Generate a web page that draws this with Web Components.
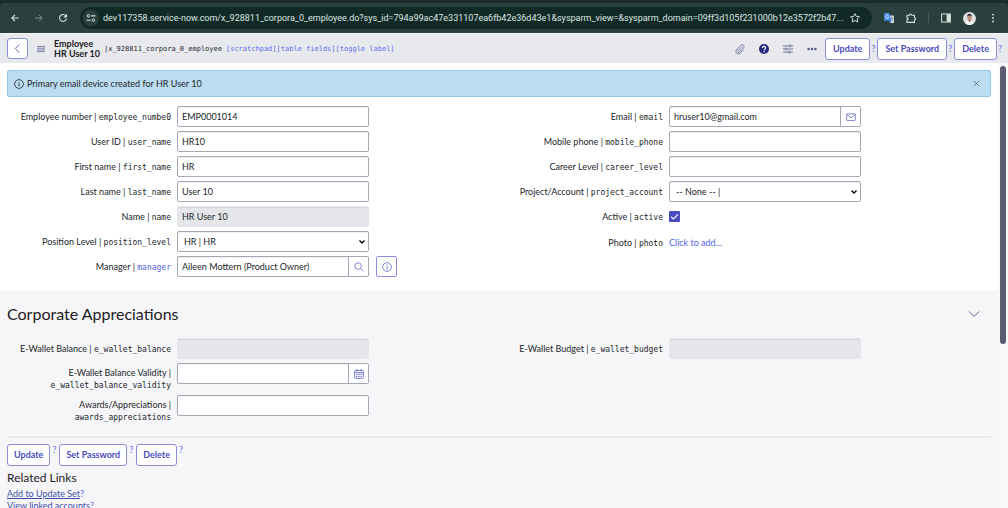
<!DOCTYPE html>
<html lang="en">
<head>
<meta charset="utf-8">
<title>HR User 10 | Employee</title>
<style>
html, body { margin: 0; height: 100%; }
body { font: 9px/12px Lato, "Liberation Sans", sans-serif; color: #22262a; background: #fff; overflow: hidden; }
</style>
</head>
<body>
<record-page></record-page>

<script>
const ICONS = {
  back: ['0 0 16 16', '<path d="M14 8H3M8 3L3 8l5 5" stroke-width="1.8"/>'],
  forward: ['0 0 16 16', '<path d="M2 8h11M8 3l5 5-5 5" stroke-width="1.6"/>'],
  reload: ['0 0 16 16', '<path d="M13 5.2A5.6 5.6 0 1 0 13.6 9M13.6 1.8v4.4H9.2" stroke-width="1.8"/>'],
  tune: ['0 0 16 16', '<circle cx="4" cy="4.5" r="2" stroke-width="1.6"/><path d="M8.5 4.5H15M1 11.5h6.5" stroke-width="1.8"/><circle cx="11.8" cy="11.5" r="2" stroke-width="1.6"/>'],
  star: ['0 0 16 16', '<path d="M8 1l2.100 4.600 5 .5-3.700 3.400 1 5L8 12l-4.400 2.500 1-5L.9 6.100l5-.5z" stroke-width="1.500" stroke-linejoin="round"/>'],
  puzzle: ['0 0 16 16', '<path d="M1.500 3.500h4a1.900 1.900 0 0 1 3.800 0H13.500v4a1.800 1.800 0 0 1 0 3.600V15H1.500v-4a1.800 1.800 0 0 0 0-3.600z" stroke-width="1.800" stroke-linejoin="round"/>'],
  panel: ['0 0 16 16', '<rect x="1" y="1.500" width="14" height="13" stroke-width="1.600"/><path d="M9 2h5.500v12H9z" fill="currentColor" stroke="none"/>'],
  kebab: ['0 0 16 16', '<g fill="currentColor" stroke="none"><circle cx="8" cy="2.500" r="1.500"/><circle cx="8" cy="8" r="1.500"/><circle cx="8" cy="13.500" r="1.500"/></g>'],
  translate: ['0 0 16 16', '<g stroke="none"><path d="M6 4h9a1 1 0 0 1 1 1v10a1 1 0 0 1-1 1H9.500z" fill="#d5dade"/><path d="M1 0h7.500L12 12.500H1a1 1 0 0 1-1-1V1a1 1 0 0 1 1-1z" fill="#4688ee"/><path d="M9.500 16l2.500-3.500H8.200z" fill="#2559b8"/></g><path d="M7.200 4.300A2.600 2.600 0 1 0 7.600 6.600H5.400" stroke="#fff" stroke-width="1.200"/><path d="M11 7.500h4M13 6.500v1M14.500 7.500c-.4 1.700-1.400 2.800-2.600 3.600M12 9l2.700 3" stroke="#66767c" stroke-width=".9"/>'],
  avatar: ['0 0 16 16', '<g stroke="none"><circle cx="8" cy="8" r="8" fill="#dfe2e4"/><path d="M2.300 13.600Q4 10.600 8 10.600t5.700 3A8 8 0 0 1 2.300 13.600z" fill="#f8f9fa"/><path d="M6.300 8h3.400v3L8 12.600 6.300 11z" fill="#a97b65"/><ellipse cx="8" cy="6.500" rx="2.700" ry="3.500" fill="#bd9079"/><path d="M5.200 6.500Q4.600 2 8 2t2.800 4.500L10.200 4.600H6z" fill="#33302f"/></g>'],
  chevleft: ['0 0 16 16', '<path d="M11 1L4 8l7 7" stroke-width="1.700"/>'],
  chevdown: ['0 0 16 16', '<path d="M0 4l8 8 8-8" stroke-width="1.500"/>'],
  menu: ['0 0 16 16', '<path d="M0 3h16M0 6.400h16M0 9.800h16M0 13.200h16" stroke-width="1.400"/>'],
  clip: ['0 0 16 16', '<path d="M11.500 4L5 10.800a1.500 1.500 0 0 0 2.200 2.100l6.500-6.800a3 3 0 0 0-4.300-4.200L2.600 9a4 4 0 0 0 5.700 5.700l5.200-5.400" stroke-width="1.200"/>'],
  help: ['0 0 16 16', '<circle cx="8" cy="8" r="8" fill="currentColor" stroke="none"/><path d="M5.500 6.300a2.500 2.400 0 1 1 3.700 2Q8 8.900 8 10" stroke="#fff" stroke-width="1.900"/><circle cx="8" cy="12.300" r="1.200" fill="#fff" stroke="none"/>'],
  sliders: ['0 0 16 16', '<path d="M0 3h9M13 3h3M0 8h3M7 8h9M0 13h8M12 13h4" stroke-width="1.300"/><circle cx="11" cy="3" r="1.800" stroke-width="1.200"/><circle cx="5" cy="8" r="1.800" stroke-width="1.200"/><circle cx="10" cy="13" r="1.800" stroke-width="1.200"/>'],
  dots: ['0 0 16 16', '<g fill="currentColor" stroke="none"><circle cx="2.500" cy="8" r="2"/><circle cx="8" cy="8" r="2"/><circle cx="13.500" cy="8" r="2"/></g>'],
  info: ['0 0 16 16', '<circle cx="8" cy="8" r="7" stroke-width="1.300"/><path d="M8 7v4.800M8 4v1.600" stroke-width="1.500"/>'],
  close: ['0 0 16 16', '<path d="M2 2l12 12M14 2L2 14" stroke-width="1.700"/>'],
  search: ['0 0 16 16', '<circle cx="6.500" cy="6.500" r="5.300" stroke-width="1.300"/><path d="M10.500 10.500L15 15" stroke-width="1.400"/>'],
  mail: ['0 0 16 16', '<rect x="1" y="3" width="14" height="10.500" rx="1" stroke-width="1.300"/><path d="M1.500 4L8 9.300 14.500 4" stroke-width="1.300"/>'],
  calendar: ['0 0 16 16', '<rect x="1" y="2.500" width="14" height="12.500" rx="1" stroke-width="1.400"/><path d="M1 6h14M4.500 0v3.500M11.500 0v3.500" stroke-width="1.500"/><path d="M3.500 9h9M3.500 12h9" stroke-width="1.800" stroke-dasharray="2 1.500"/>']
};

function define(name, template) {
  const tpl = document.createElement('template');
  customElements.define(name, class extends HTMLElement {
    connectedCallback() {
      if (this.shadowRoot) return;
      tpl.innerHTML = typeof template === 'function' ? template(this) : template;
      this.attachShadow({ mode: 'open' }).append(tpl.content.cloneNode(true));
    }
  });
}

/* One icon from the set above; size through --size. */
define('x-icon', el => {
  const [box, body] = ICONS[el.getAttribute('name')];
  return `<style>
    :host { display: block; flex: none; width: var(--size, 10px); height: var(--size, 10px); }
    svg { display: block; width: 100%; height: 100%; fill: none; stroke: currentColor; overflow: visible; }
  </style><svg viewBox="${box}" aria-hidden="true">${body}</svg>`;
});

define('browser-bar', `<style>
  :host { display: block; flex: none; background: #1c2d2a; padding-top: 3px; border-bottom: 1px solid #f4f4f6; }
  .bar { display: flex; align-items: center; height: 30px; padding: 0 10px; gap: 12px; background: #29403c; color: #d6e4e0; border-radius: 4px 4px 0 0; }
  .nav { display: flex; gap: 14px; }
  button { display: grid; place-items: center; border: 0; padding: 0; background: none; color: inherit; flex: none; }
  .off { color: #84958f; }
  .url { flex: 1; min-width: 0; display: flex; align-items: center; height: 22px; padding: 0 12px 0 3px; gap: 4px; border-radius: 11px; background: #122a26; }
  .site { width: 16px; height: 16px; border-radius: 50%; background: #29403c; }
  input { flex: 1; min-width: 0; border: 0; padding: 0; background: none; color: #dbe6e2; font: 9px/14px Roboto, sans-serif; text-overflow: ellipsis; outline: 0; }
  .sep { width: 1px; height: 10px; background: #48605b; }
</style>
<div class="bar">
  <div class="nav">
    <button aria-label="Back"><x-icon name="back"></x-icon></button>
    <button class="off" aria-label="Forward"><x-icon name="forward"></x-icon></button>
    <button aria-label="Reload"><x-icon name="reload"></x-icon></button>
  </div>
  <div class="url">
    <button class="site" aria-label="Site information"><x-icon name="tune"></x-icon></button>
    <input aria-label="Address" value="dev117358.service-now.com/x_928811_corpora_0_employee.do?sys_id=794a99ac47e331107ea6fb42e36d43e1&amp;sysparm_view=&amp;sysparm_domain=09ff3d105f231000b12e3572f2b47...">
    <button aria-label="Bookmark"><x-icon name="star"></x-icon></button>
  </div>
  <button aria-label="Translate"><x-icon name="translate"></x-icon></button>
  <button aria-label="Extensions"><x-icon name="puzzle"></x-icon></button>
  <span class="sep"></span>
  <button aria-label="Side panel"><x-icon name="panel"></x-icon></button>
  <button aria-label="Profile"><x-icon name="avatar" style="--size:13px"></x-icon></button>
  <button aria-label="Menu"><x-icon name="kebab"></x-icon></button>
</div>`);

/* Form action: a button with its help mark. */
define('ui-action', `<style>
  :host { display: flex; align-items: center; gap: 1px; }
  :host([raised]) { align-items: flex-start; gap: 2px; }
  button { height: 22px; padding: 0 7px; border: 1px solid #8c8ddc; border-radius: 3px; background: #fff; color: #4a4bbd; font: bold 9px/12px Lato, sans-serif; white-space: nowrap; }
  :host([raised]) button { padding: 0 6px; }
  a { color: #5c6df0; text-decoration: none; }
</style><button><slot></slot></button><a href="#">?</a>`);

define('form-header', `<style>
  :host { display: flex; flex: none; align-items: center; height: 29px; padding: 0 6px 0 7px; background: #e8e9ed; }
  button { display: grid; place-items: center; padding: 0; border: 0; background: none; color: #55568c; }
  .back { width: 21px; height: 21px; border: 1px solid #8c8ddc; border-radius: 3px; background: #fff; color: #5a5bb0; }
  .menu { margin: 0 9px; }
  h1 { margin: 0; font: bold 9px/10px Lato, sans-serif; color: #1d2023; }
  h1 span { display: block; }
  .meta { display: flex; gap: 4px; font: 7px/10px "DejaVu Sans Mono", monospace; margin-left: 4px; white-space: nowrap; }
  .meta a { color: #5c6df0; text-decoration: none; }
  .tools { display: flex; align-items: center; gap: 14px; margin: 0 8px 0 auto; }
  .actions { display: flex; gap: 2px; }
</style>
<button class="back" aria-label="Back"><x-icon name="chevleft" style="--size:9px"></x-icon></button>
<button class="menu" aria-label="Additional actions"><x-icon name="menu" style="--size:8px"></x-icon></button>
<h1><span>Employee</span><span>HR User 10</span></h1>
<div class="meta"><span>|x_928811_corpora_0_employee</span><span><a href="#">[scratchpad]</a><a href="#">[table fields]</a><a href="#">[toggle label]</a></span></div>
<div class="tools">
  <button aria-label="Attachments"><x-icon name="clip"></x-icon></button>
  <button aria-label="Help" style="color:#26277a"><x-icon name="help"></x-icon></button>
  <button aria-label="Personalize form"><x-icon name="sliders"></x-icon></button>
  <button aria-label="More options"><x-icon name="dots"></x-icon></button>
</div>
<div class="actions"><ui-action>Update</ui-action><ui-action>Set Password</ui-action><ui-action>Delete</ui-action></div>`);

define('message-bar', `<style>
  :host { display: flex; align-items: center; gap: 3px; height: 25px; padding: 0 10px 0 6px; border: 1px solid #8fc5ea; border-radius: 2px; background: #bcdcf1; }
  span { flex: 1; }
  button { padding: 0; border: 0; background: none; color: #4b5b78; }
</style>
<x-icon name="info"></x-icon><span><slot></slot></span><button aria-label="Close message"><x-icon name="close" style="--size:7px"></x-icon></button>`);

/* Field row: label and column name on the left, its control on the right. */
define('form-field', el => {
  const a = n => el.getAttribute(n) || '';
  const kind = a('kind') || 'text';
  const icon = el.hasAttribute('icon') ? `<button aria-label="${a('icon')}"><x-icon name="${a('icon')}"></x-icon></button>` : '';
  const control = {
    text: `<div class="group"><input id="c" value="${a('value')}">${icon}</div>`,
    readonly: `<div class="group ro"><input id="c" readonly value="${a('value')}"></div>`,
    select: `<div class="group"><select id="c"><option>${a('value')}</option></select></div>`,
    check: `<input id="c" type="checkbox" checked>`,
    link: `<a id="c" href="#">${a('value')}</a>`
  }[kind];
  const name = el.hasAttribute('reference') ? `<a href="#">${a('name')}</a>` : a('name');
  const br = el.hasAttribute('stacked') ? '<br>' : '';
  return `<style>
    :host { display: grid; grid-template-columns: 82fr 99fr 65fr; min-height: 21px; margin-bottom: 4px; }
    :host([kind=link]) { padding-top: 1px; }
    .label { text-align: right; padding-top: 5px; white-space: nowrap; }
    :host([stacked]) .label { padding-top: 4px; }
    code { font: 8px/8px "DejaVu Sans Mono", monospace; }
    a { color: #5265e8; text-decoration: none; }
    .control { display: flex; align-items: center; padding-left: 6px; height: 21px; }
    .group { flex: 1; min-width: 0; display: flex; box-sizing: border-box; height: 21px; border: 1px solid #a5a8b4; border-radius: 2px; background: #fff; overflow: hidden; box-shadow: inset 0 1px 1px #0001; }
    .ro { background: #e4e6ea; border-color: #e4e6ea; }
    .group input, select { flex: 1; min-width: 0; padding: 0 4px; border: 0; background: none; color: inherit; font: 9px/14px Lato, sans-serif; outline: 0; }
    select { appearance: none; padding: 0 6px; background: url("data:image/svg+xml,%3Csvg xmlns='http://www.w3.org/2000/svg' viewBox='0 0 6 6'%3E%3Cpath d='M.5 1.500L3 4l2.500-2.500' fill='none' stroke='black' stroke-width='1.300'/%3E%3C/svg%3E") no-repeat right 3px center / 6px 6px; }
    .group button { width: 20px; display: grid; place-items: center; padding: 0; border: 0; border-left: 1px solid #a5a8b4; background: #fff; color: #6a6bc8; }
    .extra { display: flex; padding-left: 7px; }
    .extra button { width: 21px; height: 21px; display: grid; place-items: center; padding: 0; border: 1px solid #8c8ddc; border-radius: 2px; background: #fff; color: #6a6bc8; }
    input[type=checkbox] { appearance: none; width: 11px; height: 11px; margin: 0; border-radius: 1px; background: #4a4bbd url("data:image/svg+xml,%3Csvg xmlns='http://www.w3.org/2000/svg' viewBox='0 0 11 11'%3E%3Cpath d='M2 5.700l2.300 2.300L9 3.300' fill='none' stroke='white' stroke-width='1.100'/%3E%3C/svg%3E"); }
  </style>
  <div class="label"><label for="c">${a('label')}</label> | ${br}<code>${name}</code></div>
  <div class="control">${control}</div>
  <div class="extra">${el.hasAttribute('preview') ? '<button aria-label="Preview record"><x-icon name="info"></x-icon></button>' : ''}</div>`;
});

define('field-columns', `<style>
  :host { display: grid; grid-template-columns: 1fr 1fr; align-items: start; }
</style><div><slot name="left"></slot></div><div><slot name="right"></slot></div>`);

define('form-section', `<style>
  :host { display: block; }
  header { display: flex; align-items: center; justify-content: space-between; padding: 14px 12px 14px 0; }
  h2 { margin: 0; font: 16px/20px Lato, sans-serif; color: #1d2023; }
  button { padding: 0; border: 0; background: none; color: #55568c; }
</style>
<header><h2>Corporate Appreciations</h2><button aria-label="Collapse section"><x-icon name="chevdown"></x-icon></button></header>
<slot></slot>`);

define('related-links', `<style>
  h3 { margin: 4px 0 2px; font: 12px/16px Lato, sans-serif; color: #1d2023; }
  ul { margin: 0; padding: 0; list-style: none; }
  a { color: #3c4fa8; }
  .q { color: #5c6df0; text-decoration: none; }
</style>
<h3>Related Links</h3>
<ul><li><a href="#">Add to Update Set</a><a class="q" href="#">?</a></li><li><a href="#">View linked accounts</a><a class="q" href="#">?</a></li></ul>`);

define('record-page', `<style>
  :host { display: flex; flex-direction: column; height: 100vh; overflow: hidden; }
  .view { flex: 1; min-height: 0; display: flex; }
  main { flex: 1; min-width: 0; overflow: hidden; background: #f6f6f8; }
  .top { background: #fff; padding: 7px 7px 9px; }
  .top field-columns { margin-top: 9px; }
  .lower { padding: 0 7px; }
  .actions { display: flex; gap: 3px; margin-top: 9px; padding-top: 6px; border-top: 2px solid #e9eaed; }
  .rail { width: 10px; flex: none; padding: 3px 2px 0; box-sizing: border-box; background: #f8f8fa; }
  .thumb { height: 63%; border-radius: 3px; background: #5b5b72; }
</style>
<browser-bar></browser-bar>
<form-header></form-header>
<div class="view">
  <main>
    <div class="top">
      <message-bar>Primary email device created for HR User 10</message-bar>
      <field-columns>
        <form-field slot="left" label="Employee number" name="employee_numbe0" value="EMP0001014"></form-field>
        <form-field slot="left" label="User ID" name="user_name" value="HR10"></form-field>
        <form-field slot="left" label="First name" name="first_name" value="HR"></form-field>
        <form-field slot="left" label="Last name" name="last_name" value="User 10"></form-field>
        <form-field slot="left" label="Name" name="name" kind="readonly" value="HR User 10"></form-field>
        <form-field slot="left" label="Position Level" name="position_level" kind="select" value="HR | HR"></form-field>
        <form-field slot="left" label="Manager" name="manager" reference icon="search" preview value="Aileen Mottern (Product Owner)"></form-field>
        <form-field slot="right" label="Email" name="email" icon="mail" value="hruser10@gmail.com"></form-field>
        <form-field slot="right" label="Mobile phone" name="mobile_phone"></form-field>
        <form-field slot="right" label="Career Level" name="career_level"></form-field>
        <form-field slot="right" label="Project/Account" name="project_account" kind="select" value="-- None -- |"></form-field>
        <form-field slot="right" label="Active" name="active" kind="check"></form-field>
        <form-field slot="right" label="Photo" name="photo" kind="link" value="Click to add..."></form-field>
      </field-columns>
    </div>
    <div class="lower">
      <form-section>
        <field-columns>
          <form-field slot="left" label="E-Wallet Balance" name="e_wallet_balance" kind="readonly"></form-field>
          <form-field slot="left" stacked label="E-Wallet Balance Validity" name="e_wallet_balance_validity" icon="calendar"></form-field>
          <form-field slot="left" stacked label="Awards/Appreciations" name="awards_appreciations"></form-field>
          <form-field slot="right" label="E-Wallet Budget" name="e_wallet_budget" kind="readonly"></form-field>
        </field-columns>
      </form-section>
      <div class="actions"><ui-action raised>Update</ui-action><ui-action raised>Set Password</ui-action><ui-action raised>Delete</ui-action></div>
      <related-links></related-links>
    </div>
  </main>
  <div class="rail"><div class="thumb"></div></div>
</div>`);
</script>
</body>
</html>
